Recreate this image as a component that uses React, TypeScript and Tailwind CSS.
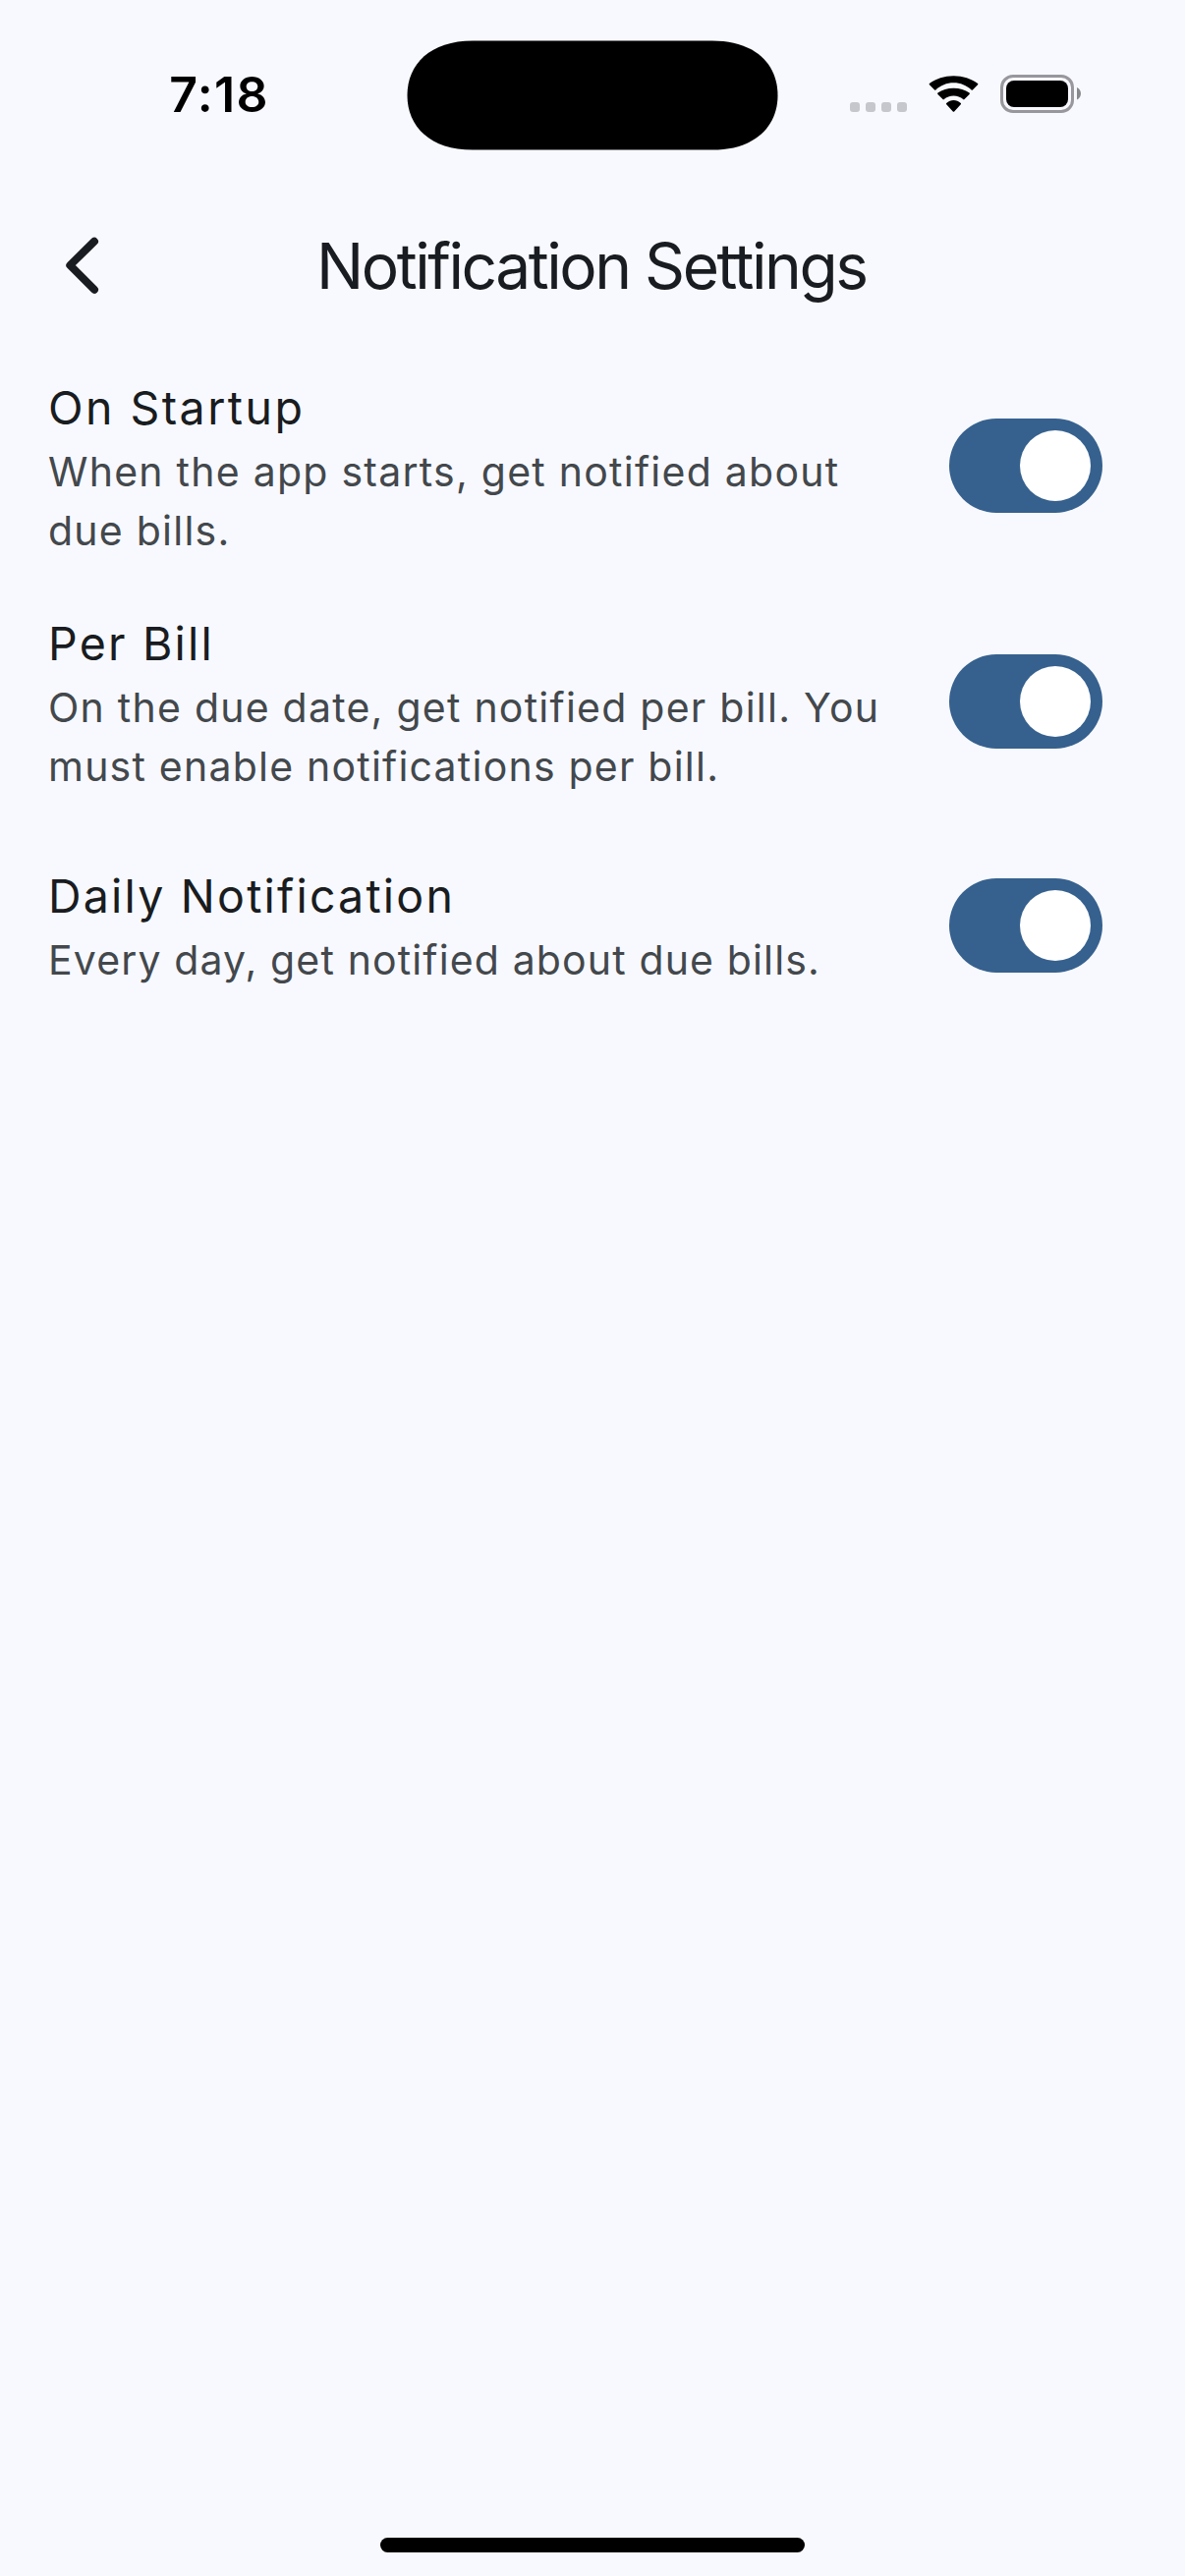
type Line = { text: string; className: string };
type Setting = { title: Line; body: Line[]; rowClass: string; textClass: string };

const settings: Setting[] = [
  {
    title: { text: 'On Startup', className: 'tracking-[2.44px]' },
    body: [
      { text: 'When the app starts, get notified about', className: 'tracking-[1.25px]' },
      { text: 'due bills.', className: 'tracking-[1.24px]' },
    ],
    rowClass: 'h-[240px]',
    textClass: 'mb-0',
  },
  {
    title: { text: 'Per Bill', className: 'tracking-[2.2px]' },
    body: [
      { text: 'On the due date, get notified per bill. You', className: 'tracking-[1.24px]' },
      { text: 'must enable notifications per bill.', className: 'tracking-[1.22px]' },
    ],
    rowClass: 'h-[240px]',
    textClass: 'mb-0',
  },
  {
    title: { text: 'Daily Notification', className: 'tracking-[2.2px]' },
    body: [{ text: 'Every day, get notified about due bills.', className: 'tracking-[1.14px]' }],
    rowClass: 'h-[216px]',
    textClass: 'mb-[2px]',
  },
];

function WifiIcon() {
  return (
    <svg width="51" height="38" viewBox="0 0 51 38" className="block">
      <path d="M25.5 7.3c7 0 13.3 2.7 18.1 7.1.4.3.9.3 1.3 0l5.2-5.1c.4-.4.4-1 0-1.3C43.5 3 35 .2 25.5.2S7.5 3 .9 8c-.4.3-.4.9 0 1.3l5.2 5.1c.4.4.9.4 1.3 0C12.2 10 18.5 7.3 25.5 7.3Z" />
      <path d="M25.5 20.5c3.8 0 7.1 1.3 9.7 3.6.4.4.9.4 1.3 0l5.1-5.1c.4-.4.4-1 0-1.400C37.2 14.3 31.6 12.7 25.5 12.7s-11.7 1.6-16.1 4.9c-.4.4-.4 1 0 1.4l5.1 5.1c.4.4.9.4 1.3 0 2.6-2.3 5.9-3.6 9.7-3.6Z" />
      <path d="M32.8 27.900c.4.4.4.9 0 1.300l-6.600 7.200c-.4.4-1 .4-1.400 0l-6.600-7.200c-.4-.4-.4-.9 0-1.300 4.200-4 10.400-4 14.600 0Z" />
    </svg>
  );
}

function StatusBar() {
  return (
    <div className="flex h-[186px] items-start">
      <div className="flex w-[414px] justify-center pl-[32px] pt-[66px]">
        <span className="text-[50px] leading-[60px] font-semibold tracking-[1.3px] text-black">7:18</span>
      </div>
      <svg width="378" height="112" viewBox="0 0 378 112" className="mt-[41px] block shrink-0">
        <path d="M67 .4H311C354 .4 377.5 24 377.5 56S354 111.600 311 111.600H67C24 111.600 .5 88 .5 56S24 .4 67 .4Z" />
      </svg>
      <div className="flex items-start pl-[73px] pt-[76px]">
        <div className="mt-[28px] flex gap-[6px]">
          {[0, 1, 2, 3].map((i) => (
            <div key={i} className="size-[10px] rounded-[3px] bg-[#c6c7cc]" />
          ))}
        </div>
        <div className="mt-[1px] ml-[22px]">
          <WifiIcon />
        </div>
        <div className="ml-[22px] h-[39px] w-[75px] rounded-[13px] border-[3px] border-[#97979c] p-[3px]">
          <div className="h-full w-full rounded-[8px] bg-black" />
        </div>
        <svg width="4" height="13" viewBox="0 0 4 13" className="mt-[13px] ml-[3px] block">
          <path d="M0 0C2.4 1.2 4 3.6 4 6.3S2.4 11.6 0 12.6Z" fill="#88898d" />
        </svg>
      </div>
    </div>
  );
}

function Switch() {
  return (
    <button role="switch" aria-checked="true" className="flex h-24 w-[156px] shrink-0 items-center justify-end rounded-full bg-[#36618e] pr-3">
      <span className="block size-[72px] rounded-full bg-white" />
    </button>
  );
}

export default function App() {
  return (
    <div className="flex h-[2622px] w-[1206px] flex-col overflow-hidden bg-[#f8f9ff] font-['Inter',sans-serif]">
      <StatusBar />
      <header className="grid h-[168px] grid-cols-[168px_1fr_168px] items-center">
        <button aria-label="Back" className="pl-[60px]">
          <svg width="48" height="66" viewBox="0 0 48 66" fill="none" stroke="#191c20" strokeWidth="8" strokeLinecap="round" strokeLinejoin="round" className="block">
            <path d="M36 8.7 11.3 33 36 57.8" />
          </svg>
        </button>
        <h1 className="mt-[1px] pl-[154px] text-[64px] leading-[84px] font-normal tracking-[-2.45px] whitespace-nowrap text-[#191c20]">
          Notification Settings
        </h1>
      </header>
      <main className="flex flex-col">
        {settings.map((s) => (
          <section key={s.title.text} className={`flex items-center justify-between pr-[84px] pl-[49px] ${s.rowClass}`}>
            <div className={`whitespace-nowrap ${s.textClass}`}>
              <h2 className={`pt-[3px] text-[46.5px] leading-[69px] font-normal text-[#191c20] ${s.title.className}`}>{s.title.text}</h2>
              {s.body.map((l) => (
                <p key={l.text} className={`text-[41px] leading-[60px] text-[#43484c] ${l.className}`}>{l.text}</p>
              ))}
            </div>
            <Switch />
          </section>
        ))}
      </main>
      <div className="mt-auto flex justify-center pb-6">
        <div className="h-[15px] w-[432px] rounded-full bg-black" />
      </div>
    </div>
  );
}
